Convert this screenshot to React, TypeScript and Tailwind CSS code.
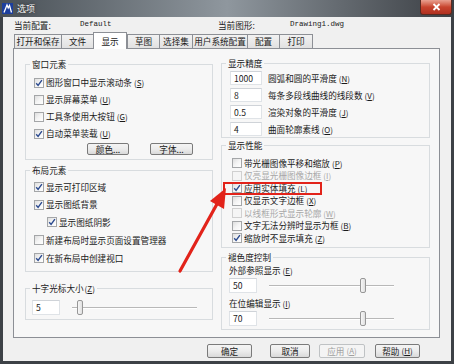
import React from "react";

const CB = ({ checked = false, disabled = false }: { checked?: boolean; disabled?: boolean }) => (
  <span
    className={`w-[10px] h-[10px] border shrink-0 flex items-center justify-center ${
      disabled
        ? "border-[#d0d0d0] bg-[#f5f5f5]"
        : "border-[#a4a6a8] bg-gradient-to-br from-[#dedede] via-[#f4f4f4] to-[#ffffff]"
    }`}
  >
    {checked && (
      <svg width="8" height="8" viewBox="0 0 8 8">
        <path d="M1.2 4.2 L3.1 6.4 L6.9 1.2" stroke="#2b4a8f" strokeWidth="1.4" fill="none" />
      </svg>
    )}
  </span>
);

const Lbl = ({ t, k, disabled = false }: { t: string; k: string; disabled?: boolean }) => (
  <span className={`whitespace-nowrap ${disabled ? "text-[#a8a8a8]" : "text-[#1a1a1a]"}`}>
    {t}
    <span className="ml-[2px] text-[8px]">
      (<span className="underline">{k}</span>)
    </span>
  </span>
);

const Row = ({
  t,
  k,
  checked,
  disabled,
  h,
  pl,
}: {
  t: string;
  k?: string;
  checked?: boolean;
  disabled?: boolean;
  h: string;
  pl: string;
}) => (
  <div className={`flex items-center gap-[2px] ${h} ${pl}`}>
    <CB checked={checked} disabled={disabled} />
    {k ? <Lbl t={t} k={k} disabled={disabled} /> : <span className="whitespace-nowrap text-[#1a1a1a]">{t}</span>}
  </div>
);

const Legend = ({ children }: { children: React.ReactNode }) => (
  <legend className="ml-[4px] px-[2px] h-[12px] leading-[12px] text-[#1a1a1a] whitespace-nowrap">{children}</legend>
);

const Btn = ({ w, children, disabled = false }: { w: string; children: React.ReactNode; disabled?: boolean }) => (
  <div
    className={`${w} h-full rounded-[2px] border flex items-center justify-center ${
      disabled
        ? "border-[#bfc2c4] bg-[#f4f4f4] text-[#a0a0a0]"
        : "border-[#7a7a7a] bg-gradient-to-b from-[#f4f4f4] via-[#ececec] to-[#d9d9d9] text-[#1a1a1a]"
    }`}
  >
    {children}
  </div>
);

const Input = ({ v, w, h = "h-[14px]" }: { v: string; w: string; h?: string }) => (
  <div className={`${w} ${h} bg-white border border-[#dfe3e7] border-t-[#cfd3d8] flex items-center pl-[3px] text-[#1a1a1a] shrink-0`}>
    {v}
  </div>
);

const Slider = ({ w, ml, thumb }: { w: string; ml: string; thumb: number }) => (
  <div className={`${w} ${ml} h-[15px] relative flex items-center`}>
    <div className="w-full h-[2px] border-t border-[#b8b8b8] border-b border-b-white" />
    <div
      className="absolute top-0 w-[6px] h-[15px] rounded-[2px] border border-[#979797] bg-gradient-to-r from-[#f7f7f7] to-[#e0e0e0]"
      style={{ left: thumb }}
    />
  </div>
);

export default function App() {
  const tabs = [
    ["打开和保存", "w-[48px]"],
    ["文件", "w-[33px]"],
    ["显示", "w-[34px]"],
    ["草图", "w-[33px]"],
    ["选择集", "w-[34px]"],
    ["用户系统配置", "w-[56px]"],
    ["配置", "w-[33px]"],
    ["打印", "w-[34px]"],
  ];
  return (
    <div className="w-[454px] h-[364px] bg-[#3d4146] flex flex-col overflow-hidden relative font-['Noto_Sans_CJK_SC',sans-serif] text-[8.6px] leading-none">
      {/* Title bar */}
      <div className="h-[17px] shrink-0 flex items-start bg-gradient-to-r from-[#4a5157] via-[#8f979e] to-[#3c4045]">
        <div className="mt-[3px] ml-[2px] w-[11px] h-[11px]">
          <svg width="11" height="11" viewBox="0 0 11 11">
            <rect x="0" y="0" width="11" height="11" fill="#1d3f9e" />
            <path d="M2 9.5 L5 2 L6.2 5 L7.5 2.5 L9.5 9.5" stroke="#ffffff" strokeWidth="1.3" fill="none" />
          </svg>
        </div>
        <span className="ml-[4px] mt-[4px] text-[9px] text-[#f4f4f4] [text-shadow:0_0_3px_#222]">选项</span>
        <div className="ml-auto mr-[2px] w-[32px] h-[15px] rounded-b-[3px] border border-[#5a2a20] border-t-0 bg-gradient-to-b from-[#e8a090] via-[#c8442e] to-[#b03020] flex items-center justify-center">
          <svg width="9" height="8" viewBox="0 0 9 8">
            <path d="M1.5 1 L7.5 7 M7.5 1 L1.5 7" stroke="#ffffff" strokeWidth="1.8" />
          </svg>
        </div>
      </div>

      {/* Body */}
      <div className="flex-1 mx-[3px] mb-[3px] bg-[#f0f0f0] flex flex-col">
        <div className="h-[16px] flex items-center text-[#1a1a1a]">
          <span className="ml-[11px] w-[66px]">当前配置:</span>
          <span className="w-[138px] font-['Liberation_Mono',monospace] text-[7.5px]">Default</span>
          <span className="w-[72px]">当前图形:</span>
          <span className="font-['Liberation_Mono',monospace] text-[7.5px]">Drawing1.dwg</span>
        </div>

        {/* Tabs */}
        <div className="h-[15px] flex items-end ml-[11px] relative z-10">
          {tabs.map(([t, w], i) =>
            i === 2 ? (
              <div
                key={t}
                className={`${w} h-[17px] -mb-px bg-white border border-[#8c8f95] border-b-0 flex items-center justify-center text-[#1a1a1a]`}
              >
                {t}
              </div>
            ) : (
              <div
                key={t}
                className={`${w} h-[14px] bg-gradient-to-b from-[#f2f2f2] to-[#e1e1e1] border border-[#8c8f95] border-b-0 -mr-px flex items-center justify-center text-[#1a1a1a]`}
              >
                {t}
              </div>
            )
          )}
        </div>

        {/* Panel */}
        <div className="ml-[10px] w-[427px] h-[290px] border border-[#8c8f95] bg-[#f7f7f7] flex pl-[11px]">
          {/* Left column */}
          <div className="w-[188px] flex flex-col">
            <fieldset className="mt-[9px] h-[102px] border border-[#d8dcdf]">
              <Legend>窗口元素</Legend>
              <div className="mt-[4px]">
                <Row t="图形窗口中显示滚动条" k="S" checked h="h-[17px]" pl="pl-[8px]" />
                <Row t="显示屏幕菜单" k="U" h="h-[17px]" pl="pl-[8px]" />
                <Row t="工具条使用大按钮" k="G" h="h-[17px]" pl="pl-[8px]" />
                <Row t="自动菜单装载" k="U" checked h="h-[17px]" pl="pl-[8px]" />
              </div>
              <div className="mt-[1px] h-[12px] flex pl-[61px] gap-[21px]">
                <Btn w="w-[42px]">颜色...</Btn>
                <Btn w="w-[43px]">字体...</Btn>
              </div>
            </fieldset>

            <fieldset className="mt-[4px] h-[108px] border border-[#d8dcdf]">
              <Legend>布局元素</Legend>
              <div className="mt-[2px]">
                <Row t="显示可打印区域" checked h="h-[17.75px]" pl="pl-[8px]" />
                <Row t="显示图纸背景" checked h="h-[17.75px]" pl="pl-[8px]" />
                <Row t="显示图纸阴影" checked h="h-[17.75px]" pl="pl-[21px]" />
                <Row t="新建布局时显示页面设置管理器" h="h-[17.75px]" pl="pl-[8px]" />
                <Row t="在新布局中创建视口" checked h="h-[17.75px]" pl="pl-[8px]" />
              </div>
            </fieldset>

            <fieldset className="mt-[10px] h-[38px] border border-[#d8dcdf]">
              <Legend>
                十字光标大小<span className="ml-[1px] text-[8px]">(<span className="underline">Z</span>)</span>
              </Legend>
              <div className="mt-[6px] flex items-center pl-[6px]">
                <Input v="5" w="w-[28px]" h="h-[15px]" />
                <Slider w="w-[125px]" ml="ml-[12px]" thumb={5} />
              </div>
            </fieldset>
          </div>

          {/* Right column */}
          <div className="ml-[8px] w-[209px] flex flex-col">
            <fieldset className="mt-[8px] h-[81px] border border-[#d8dcdf]">
              <Legend>显示精度</Legend>
              <div className="mt-[2px] flex flex-col gap-[3px] pl-[8px]">
                {[
                  ["1000", "圆弧和圆的平滑度", "N"],
                  ["8", "每条多段线曲线的线段数", "V"],
                  ["0.5", "渲染对象的平滑度", "J"],
                  ["4", "曲面轮廓素线", "O"],
                ].map(([v, t, k]) => (
                  <div key={t} className="flex items-center h-[14px]">
                    <Input v={v} w="w-[32px]" />
                    <span className="ml-[6px]">
                      <Lbl t={t} k={k} />
                    </span>
                  </div>
                ))}
              </div>
            </fieldset>

            <fieldset className="mt-[1px] h-[109px] border border-[#d8dcdf]">
              <Legend>显示性能</Legend>
              <div className="mt-[6px]">
                <Row t="带光栅图像平移和缩放" k="P" h="h-[12.5px]" pl="pl-[10px]" />
                <Row t="仅亮显光栅图像边框" k="I" disabled h="h-[12.5px]" pl="pl-[10px]" />
                <Row t="应用实体填充" k="L" checked h="h-[12.5px]" pl="pl-[10px]" />
                <Row t="仅显示文字边框" k="X" h="h-[12.5px]" pl="pl-[10px]" />
                <Row t="以线框形式显示轮廓" k="W" disabled h="h-[12.5px]" pl="pl-[10px]" />
                <Row t="文字无法分辨时显示为框" k="B" h="h-[12.5px]" pl="pl-[10px]" />
                <Row t="缩放时不显示填充" k="Z" checked h="h-[12.5px]" pl="pl-[10px]" />
              </div>
            </fieldset>

            <fieldset className="mt-[3px] h-[79px] border border-[#d8dcdf]">
              <Legend>褪色度控制</Legend>
              <div className="pl-[7px]">
                <div className="mt-[1px] h-[12px] flex items-center">
                  <Lbl t="外部参照显示" k="E" />
                </div>
                <div className="mt-[2px] flex items-center">
                  <Input v="50" w="w-[28px]" h="h-[15px]" />
                  <Slider w="w-[125px]" ml="ml-[12px]" thumb={91} />
                </div>
                <div className="mt-[4px] h-[12px] flex items-center">
                  <Lbl t="在位编辑显示" k="I" />
                </div>
                <div className="mt-[2px] flex items-center">
                  <Input v="70" w="w-[28px]" h="h-[15px]" />
                  <Slider w="w-[125px]" ml="ml-[12px]" thumb={91} />
                </div>
              </div>
            </fieldset>
          </div>
        </div>

        {/* Bottom buttons */}
        <div className="mt-[6px] h-[14px] flex">
          <div className="ml-[204px]">
            <Btn w="w-[45px]">确定</Btn>
          </div>
          <div className="ml-[18px] h-full">
            <Btn w="w-[40px]">取消</Btn>
          </div>
          <div className="ml-[9px] h-full">
            <Btn w="w-[46px]" disabled>
              应用<span className="ml-[2px] text-[8px]">(<span className="underline">A</span>)</span>
            </Btn>
          </div>
          <div className="ml-[10px] h-full">
            <Btn w="w-[45px]">
              帮助<span className="ml-[2px] text-[8px]">(<span className="underline">H</span>)</span>
            </Btn>
          </div>
        </div>
      </div>

      {/* Red highlight rectangle */}
      <div className="absolute left-[223px] top-[182px] w-[99px] h-[13px] border-2 border-[#e2231a]" />
      {/* Red arrow */}
      <svg className="absolute left-0 top-0" width="454" height="364" viewBox="0 0 454 364">
        <line x1="180" y1="271" x2="217" y2="204" stroke="#e2231a" strokeWidth="3.2" strokeLinecap="round" />
        <polygon points="226,188 224,209 210,201" fill="#e2231a" />
      </svg>
    </div>
  );
}
